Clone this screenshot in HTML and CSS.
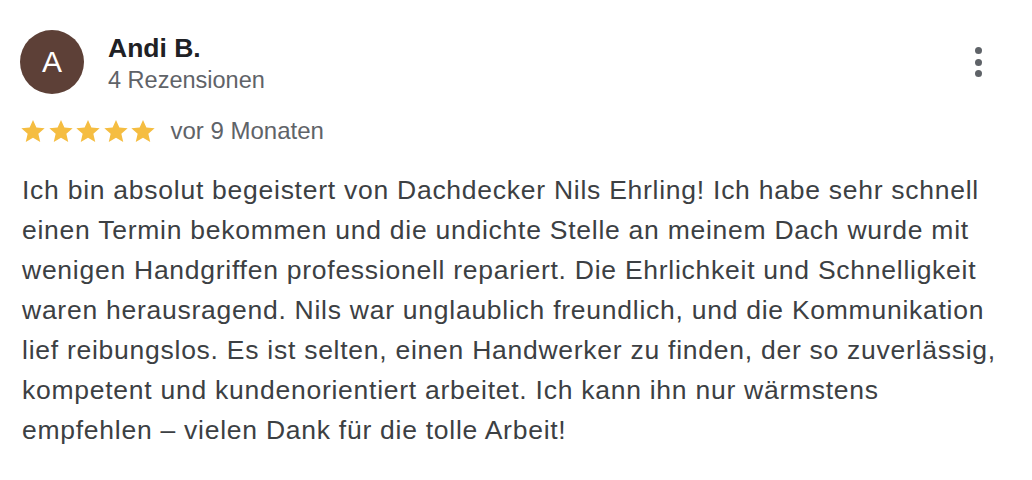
FILE: index.html
```html
<!DOCTYPE html>
<html lang="de">
<head>
<meta charset="utf-8">
<link rel="stylesheet" href="styles.css">
</head>
<body>
<div class="review">
  <div class="head">
    <div class="avatar">A</div>
    <div class="who">
      <div class="name">Andi B.</div>
      <div class="count">4 Rezensionen</div>
    </div>
    <div class="menu"><span></span><span></span><span></span></div>
  </div>
  <div class="meta">
    <div class="stars">
      <svg viewBox="0 0 24 24"><path d="M12 2.5l2.9 6.6 7.1.6-5.4 4.7 1.6 7-6.2-3.7-6.2 3.7 1.6-7L2 9.7l7.1-.6z"/></svg>
      <svg viewBox="0 0 24 24"><path d="M12 2.5l2.9 6.6 7.1.6-5.4 4.7 1.6 7-6.2-3.7-6.2 3.7 1.6-7L2 9.7l7.1-.6z"/></svg>
      <svg viewBox="0 0 24 24"><path d="M12 2.5l2.9 6.6 7.1.6-5.4 4.7 1.6 7-6.2-3.7-6.2 3.7 1.6-7L2 9.7l7.1-.6z"/></svg>
      <svg viewBox="0 0 24 24"><path d="M12 2.5l2.9 6.6 7.1.6-5.4 4.7 1.6 7-6.2-3.7-6.2 3.7 1.6-7L2 9.7l7.1-.6z"/></svg>
      <svg viewBox="0 0 24 24"><path d="M12 2.5l2.9 6.6 7.1.6-5.4 4.7 1.6 7-6.2-3.7-6.2 3.7 1.6-7L2 9.7l7.1-.6z"/></svg>
    </div>
    <span class="date">vor 9 Monaten</span>
  </div>
  <p class="text">Ich bin absolut begeistert von Dachdecker Nils Ehrling! Ich habe sehr schnell einen Termin bekommen und die undichte Stelle an meinem Dach wurde mit wenigen Handgriffen professionell repariert. Die Ehrlichkeit und Schnelligkeit waren herausragend. Nils war unglaublich freundlich, und die Kommunikation lief reibungslos. Es ist selten, einen Handwerker zu finden, der so zuverlässig, kompetent und kundenorientiert arbeitet. Ich kann ihn nur wärmstens empfehlen – vielen Dank für die tolle Arbeit!</p>
</div>
</body>
</html>
```
FILE: styles.css
```css
html, body {
  margin: 0;
  background: #fff;
}
body {
  font-family: "Liberation Sans", Arial, sans-serif;
  color: #3c4043;
}
.review {
  padding: 30px 0 0 20px;
  width: 980px;
}
.head {
  display: flex;
  align-items: flex-start;
}
.avatar {
  width: 64px;
  height: 64px;
  border-radius: 50%;
  background: #5d4037;
  color: #fff;
  font-size: 30px;
  display: flex;
  align-items: center;
  justify-content: center;
}
.who {
  margin-left: 24px;
  flex: 1;
  padding-top: 3px;
}
.name {
  font-weight: bold;
  font-size: 26.5px;
  line-height: 30px;
  color: #202124;
}
.count {
  font-size: 23.5px;
  line-height: 30px;
  color: #5f6368;
  margin-top: 2px;
}
.menu {
  display: flex;
  flex-direction: column;
  align-items: center;
  gap: 4.5px;
  width: 14px;
  margin-top: 17px;
  margin-right: 15px;
}
.menu span {
  width: 7px;
  height: 7px;
  border-radius: 50%;
  background: #5f6368;
}
.meta {
  display: flex;
  align-items: center;
  margin-top: 22px;
  height: 28px;
}
.stars {
  display: flex;
  margin-left: -1px;
}
.stars svg {
  width: 28px;
  height: 28px;
  margin-right: -0.5px;
  fill: #f5bd41;
}
.date {
  margin-left: 14px;
  font-size: 24px;
  color: #5f6368;
}
.text {
  margin: 25px 0 0 2px;
  font-size: 26.5px;
  letter-spacing: 0.74px;
  line-height: 40px;
  color: #3c4043;
}
```
